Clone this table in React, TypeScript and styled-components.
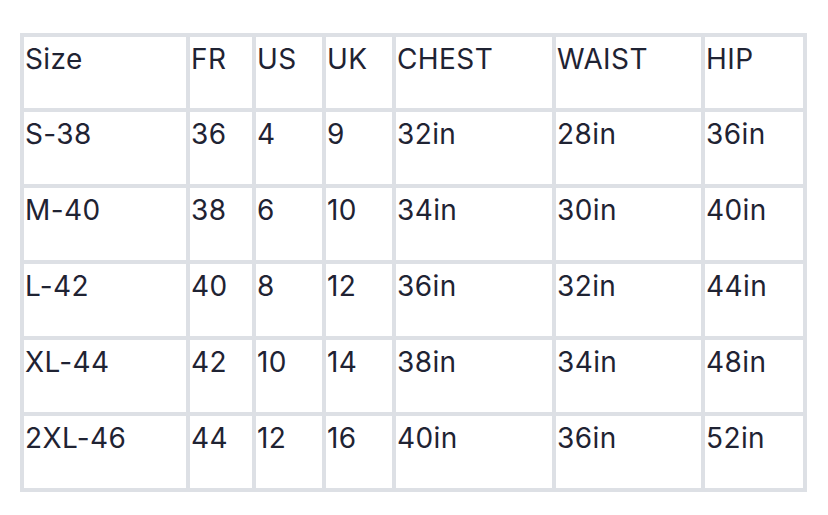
import React from "react";
import styled, { createGlobalStyle } from "styled-components";

const Global = createGlobalStyle`
  html, body { margin: 0; padding: 0; background: #ffffff; }
  body { width: 828px; height: 515px; overflow: hidden; }
`;

const Page = styled.div`
  padding: 33px 21px 0 20px;
`;

const Grid = styled.div`
  display: grid;
  grid-template-columns: 162px 62px 66px 66px 156px 145px 98px;
  grid-template-rows: 71px repeat(5, 72px);
  gap: 4px;
  padding: 4px;
  width: max-content;
  background: #dde0e5;
`;

const Cell = styled.div`
  background: #ffffff;
  color: #1f2333;
  font-family: Inter, "Liberation Sans", sans-serif;
  font-size: 28px;
  letter-spacing: 0.4px;
  line-height: 1.21;
  padding: 6px 2px 0 1px;
  white-space: nowrap;
`;

const header = ["Size", "FR", "US", "UK", "CHEST", "WAIST", "HIP"];
const rows = [
  ["S-38", "36", "4", "9", "32in", "28in", "36in"],
  ["M-40", "38", "6", "10", "34in", "30in", "40in"],
  ["L-42", "40", "8", "12", "36in", "32in", "44in"],
  ["XL-44", "42", "10", "14", "38in", "34in", "48in"],
  ["2XL-46", "44", "12", "16", "40in", "36in", "52in"],
];

export default function App() {
  return (
    <>
      <Global />
      <Page>
        <Grid>
          {[header, ...rows].map((r, i) =>
            r.map((c, j) => <Cell key={`${i}-${j}`}>{c}</Cell>)
          )}
        </Grid>
      </Page>
    </>
  );
}
